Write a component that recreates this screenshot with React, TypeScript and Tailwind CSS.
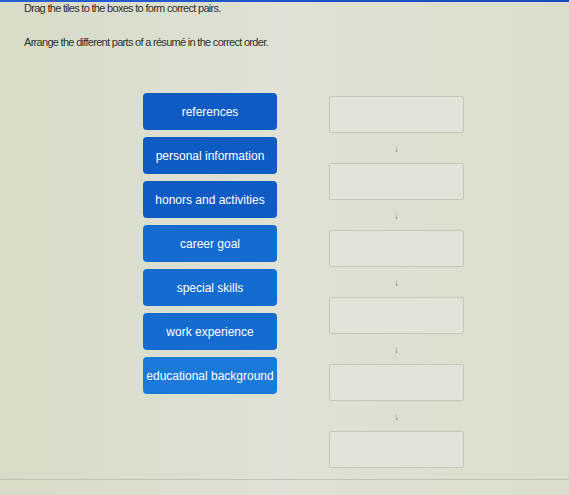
const tiles = [
  'references',
  'personal information',
  'honors and activities',
  'career goal',
  'special skills',
  'work experience',
  'educational background',
];

const slots = 6;

export default function App() {
  return (
    <div
      className="relative w-[569px] h-[495px] overflow-hidden bg-gradient-to-r from-[#d7dbc7] via-[#dfe2d4] to-[#dadecb] text-[#2f3230]"
      style={{ fontFamily: '"Liberation Sans", Arial, sans-serif' }}
    >
      <div className="h-[2px] bg-gradient-to-r from-[#2a5fd0] to-[#1c45c0]" />

      <div className="pl-[24px] text-[11px] leading-[14px] tracking-[-0.7px]">
        <p className="-mt-[1px]">Drag the tiles to the boxes to form correct pairs.</p>
        <p className="mt-[20px]">Arrange the different parts of a résumé in the correct order.</p>
      </div>

      <div className="flex mt-[44px]">
        {/* draggable tiles */}
        <div className="ml-[143px] flex flex-col gap-[7px] w-[134px]">
          {tiles.map((t, i) => (
            <div
              key={t}
              className={
                'h-[37px] rounded-[4px] flex items-center justify-center text-white text-[12px] ' +
                (i < 3 ? 'bg-[#0e5bc3]' : i < 6 ? 'bg-[#146bd0]' : 'bg-[#1a79d9]')
              }
            >
              {t}
            </div>
          ))}
        </div>

        {/* drop targets with arrows between */}
        <div className="ml-[52px] mt-[3px] flex flex-col items-center w-[135px]">
          {Array.from({ length: slots }).map((_, i) => (
            <div key={i} className="flex flex-col items-center w-full">
              <div className="w-full h-[37px] rounded-[2px] border border-[#c3c7b8] bg-[#e1e4d6]" />
              {i < slots - 1 && (
                <div className="h-[30px] flex items-center justify-center text-[10px] text-[#7c7f74]">↓</div>
              )}
            </div>
          ))}
        </div>
      </div>

      <div className="absolute left-0 right-0 top-[479px] h-px bg-[#bfc2b4]" />
    </div>
  );
}
